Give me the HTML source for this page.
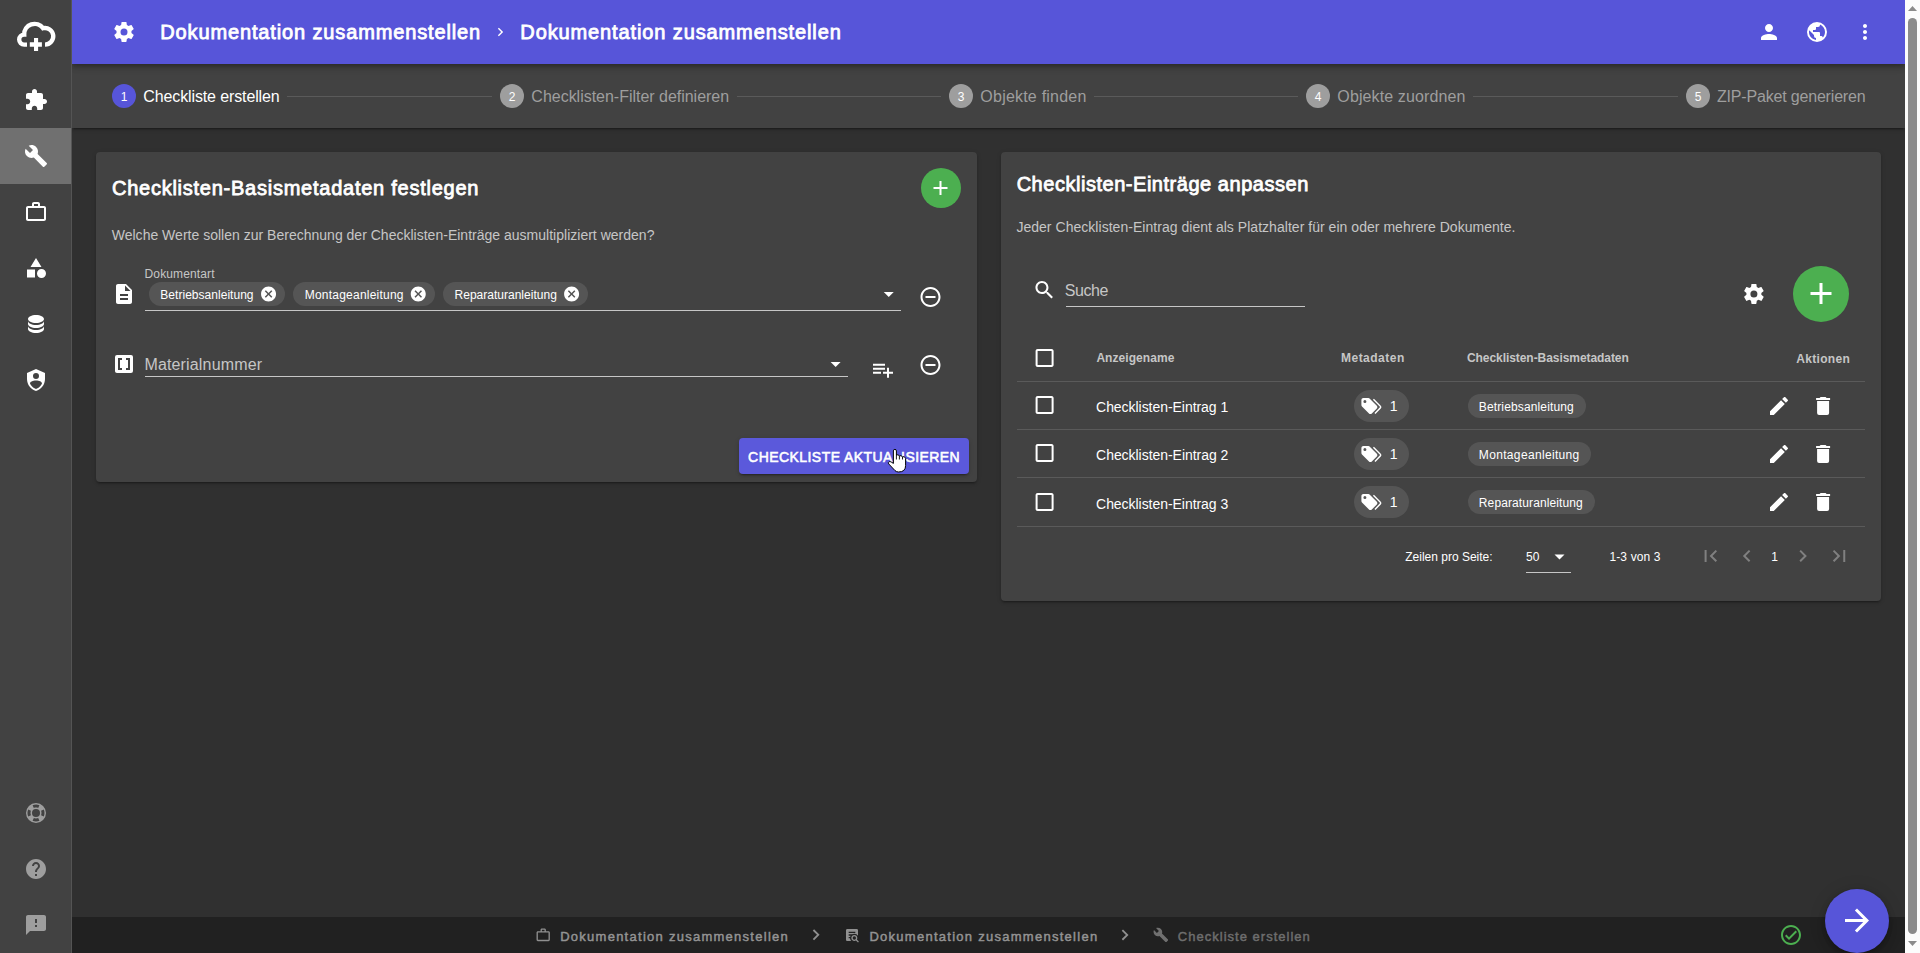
<!DOCTYPE html>
<html lang="de">
<head>
<meta charset="utf-8">
<title>Dokumentation zusammenstellen</title>
<style>
*{box-sizing:border-box;margin:0;padding:0}
html,body{width:1920px;height:953px;overflow:hidden;background:#303030;font-family:"Liberation Sans",sans-serif;color:#fff}
.abs{position:absolute}
.t{position:absolute;white-space:nowrap;line-height:1}
svg{position:absolute;display:block}
#sidebar{left:0;top:0;width:72px;height:953px;background:#424242;border-right:1px solid #545454}
#sideactive{left:0;top:128px;width:71px;height:56px;background:#707070}
#header{left:72px;top:0;width:1833px;height:64px;background:#5755d9;box-shadow:0 2px 4px -1px rgba(0,0,0,.2),0 4px 5px 0 rgba(0,0,0,.14),0 1px 10px 0 rgba(0,0,0,.12)}
#stepper{left:72px;top:64px;width:1833px;height:64px;background:#424242;box-shadow:0 3px 1px -2px rgba(0,0,0,.2),0 2px 2px 0 rgba(0,0,0,.14),0 1px 5px 0 rgba(0,0,0,.12)}
.card{background:#424242;border-radius:4px;box-shadow:0 3px 1px -2px rgba(0,0,0,.2),0 2px 2px 0 rgba(0,0,0,.14),0 1px 5px 0 rgba(0,0,0,.12)}
#footer{left:72px;top:917px;width:1833px;height:36px;background:#212121}
#scroll{left:1905px;top:0;width:15px;height:953px;background:#fcfcfc}
#thumb{left:1908px;top:18px;width:9px;height:916px;background:#8b8b8b;border-radius:5px}
.stepc{width:24px;height:24px;border-radius:50%;background:#9e9e9e;top:84px}
.stepn{font-size:12px;color:#fff;top:91px;width:24px;text-align:center}
.stepl{font-size:16px;top:88px;color:#9e9e9e}
.sline{height:1px;background:#5a5a5a;top:96px}
.chip{height:24px;border-radius:12px;background:#555}
.th{font-size:12px;font-weight:700;color:#c6c6c6}
.hline{height:1px;background:#5a5a5a}
</style>
</head>
<body>
<main>
<section id="basis">
<div class="abs card" id="cardL" style="left:96px;top:152px;width:881px;height:330px"></div>
<div class="t" id="lt" style="left:111.96px;top:178.07px;font-size:20px;font-weight:400;-webkit-text-stroke-width:.04em;letter-spacing:0.751px">Checklisten-Basismetadaten festlegen</div>
<div class="t" id="lsub" style="left:111.74px;top:228.15px;font-size:14px;color:#c6c6c6;letter-spacing:0.010px">Welche Werte sollen zur Berechnung der Checklisten-Einträge ausmultipliziert werden?</div>
<div class="abs" style="left:921px;top:168px;width:40px;height:40px;border-radius:50%;background:#4caf50"></div>
<svg viewBox="-0.5 0 24 24" style="left:928px;top:176px;width:24px;height:24px" fill="#fff"><path d="M19 13h-6v6h-2v-6H5v-2h6V5h2v6h6v2z"/></svg>
<svg viewBox="0 0 24 24" style="left:112px;top:282px;width:24px;height:24px" fill="#fff"><path d="M14 2H6c-1.1 0-1.99.9-1.99 2L4 20c0 1.1.89 2 1.99 2H18c1.1 0 2-.9 2-2V8l-6-6zm2 16H8v-2h8v2zm0-4H8v-2h8v2zm-3-5V3.5L18.5 9H13z"/></svg>
<div class="t" id="dok" style="left:144.54px;top:267.84px;font-size:12px;color:#c6c6c6;letter-spacing:0.129px">Dokumentart</div>
<div class="abs chip" style="left:149px;top:282px;width:136px"></div><div class="t" id="c0" style="left:160.31px;top:288.84px;font-size:12px;letter-spacing:0.032px">Betriebsanleitung</div><svg viewBox="-0.733 0 24 24" style="left:259px;top:285px;width:18px;height:18px" fill="#fff"><path d="M12 2C6.47 2 2 6.47 2 12s4.47 10 10 10 10-4.47 10-10S17.53 2 12 2zm5 13.59L15.59 17 12 13.41 8.41 17 7 15.59 10.59 12 7 8.41 8.41 7 12 10.59 15.59 7 17 8.41 13.41 12 17 15.59z"/></svg>
<div class="abs chip" style="left:293px;top:282px;width:142px"></div><div class="t" id="c1" style="left:304.68px;top:288.84px;font-size:12px;letter-spacing:0.229px">Montageanleitung</div><svg viewBox="-0.333 0 24 24" style="left:409px;top:285px;width:18px;height:18px" fill="#fff"><path d="M12 2C6.47 2 2 6.47 2 12s4.47 10 10 10 10-4.47 10-10S17.53 2 12 2zm5 13.59L15.59 17 12 13.41 8.41 17 7 15.59 10.59 12 7 8.41 8.41 7 12 10.59 15.59 7 17 8.41 13.41 12 17 15.59z"/></svg>
<div class="abs chip" style="left:443px;top:282px;width:145px"></div><div class="t" id="c2" style="left:454.54px;top:288.84px;font-size:12px;letter-spacing:0.012px">Reparaturanleitung</div><svg viewBox="-0.8 0 24 24" style="left:562px;top:285px;width:18px;height:18px" fill="#fff"><path d="M12 2C6.47 2 2 6.47 2 12s4.47 10 10 10 10-4.47 10-10S17.53 2 12 2zm5 13.59L15.59 17 12 13.41 8.41 17 7 15.59 10.59 12 7 8.41 8.41 7 12 10.59 15.59 7 17 8.41 13.41 12 17 15.59z"/></svg>
<div class="abs" style="left:145px;top:310px;width:756px;height:1px;background:#c6c6c6"></div>
<svg viewBox="-0.75 0 24 24" style="left:876px;top:282px;width:24px;height:24px" fill="#fff"><path d="M7 10l5 5 5-5z"/></svg>
<svg viewBox="-0.5 0 24 24" style="left:918px;top:285px;width:24px;height:24px" fill="#fff"><path d="M7 11v2h10v-2H7zm5-9C6.48 2 2 6.48 2 12s4.48 10 10 10 10-4.48 10-10S17.52 2 12 2zm0 18c-4.41 0-8-3.59-8-8s3.59-8 8-8 8 3.59 8 8-3.59 8-8 8z"/></svg>
<svg viewBox="0 0 24 24" style="left:112px;top:352px;width:24px;height:24px" fill="#fff"><path d="M3,5A2,2 0 0,1 5,3H19A2,2 0 0,1 21,5V19A2,2 0 0,1 19,21H5C3.89,21 3,20.1 3,19V5M6,6V18H10V16H8V8H10V6H6M16,16H14V18H18V6H14V8H16V16Z"/></svg>
<div class="t" id="mat" style="left:144.41px;top:357.46px;font-size:16px;color:#c6c6c6;letter-spacing:0.158px">Materialnummer</div>
<div class="abs" style="left:145px;top:376px;width:703px;height:1px;background:#c6c6c6"></div>
<svg viewBox="-0.6 0 24 24" style="left:823px;top:352px;width:24px;height:24px" fill="#fff"><path d="M7 10l5 5 5-5z"/></svg>
<svg viewBox="0 -0.7 24 24" style="left:871px;top:357px;width:24px;height:24px" fill="#fff"><path d="M2,16H10V14H2M18,14V10H16V14H12V16H16V20H18V16H22V14M14,6H2V8H14M14,10H2V12H14V10Z"/></svg>
<svg viewBox="-0.5 -0.9 24 24" style="left:918px;top:352px;width:24px;height:24px" fill="#fff"><path d="M7 11v2h10v-2H7zm5-9C6.48 2 2 6.48 2 12s4.48 10 10 10 10-4.48 10-10S17.52 2 12 2zm0 18c-4.41 0-8-3.59-8-8s3.59-8 8-8 8 3.59 8 8-3.59 8-8 8z"/></svg>
<div class="abs" style="left:739px;top:438px;width:230px;height:36px;border-radius:4px;background:#5b59db;box-shadow:0 3px 1px -2px rgba(0,0,0,.2),0 2px 2px 0 rgba(0,0,0,.14),0 1px 5px 0 rgba(0,0,0,.12)"></div>
<div class="t" id="btn" style="left:748.11px;top:450.15px;font-size:14px;font-weight:400;-webkit-text-stroke-width:.04em;letter-spacing:0.439px">CHECKLISTE AKTUALISIEREN</div>
</section>
<section id="eintraege">
<div class="abs card" id="cardR" style="left:1001px;top:152px;width:880px;height:449px"></div>
<div class="t" id="rt" style="left:1016.64px;top:174.07px;font-size:20px;font-weight:400;-webkit-text-stroke-width:.04em;letter-spacing:0.530px">Checklisten-Einträge anpassen</div>
<div class="t" id="rsub" style="left:1016.38px;top:220.15px;font-size:14px;color:#c6c6c6;letter-spacing:0.034px">Jeder Checklisten-Eintrag dient als Platzhalter für ein oder mehrere Dokumente.</div>
<svg viewBox="-0.45 -0.95 24 24" style="left:1032px;top:277px;width:24px;height:24px" fill="#fff"><path d="M15.5 14h-.79l-.28-.27C15.41 12.59 16 11.11 16 9.5 16 5.91 13.09 3 9.5 3S3 5.91 3 9.5 5.91 16 9.5 16c1.61 0 3.09-.59 4.23-1.57l.27.28v.79l5 4.99L20.49 19l-4.99-5zm-6 0C7.01 14 5 11.99 5 9.5S7.01 5 9.5 5 14 7.01 14 9.5 11.99 14 9.5 14z"/></svg>
<div class="t" id="suche" style="left:1064.84px;top:283.46px;font-size:16px;color:#c6c6c6;letter-spacing:-0.437px">Suche</div>
<div class="abs" style="left:1066px;top:306px;width:239px;height:1px;background:#c6c6c6"></div>
<svg viewBox="-0.9 -0.9 24 24" style="left:1741px;top:281px;width:24px;height:24px" fill="#fff"><path d="M12,15.5A3.5,3.5 0 0,1 8.5,12A3.5,3.5 0 0,1 12,8.5A3.5,3.5 0 0,1 15.5,12A3.5,3.5 0 0,1 12,15.5M19.43,12.97C19.47,12.65 19.5,12.33 19.5,12C19.5,11.67 19.47,11.34 19.43,11L21.54,9.37C21.73,9.22 21.78,8.95 21.66,8.73L19.66,5.27C19.54,5.05 19.27,4.96 19.05,5.05L16.56,6.05C16.04,5.66 15.5,5.32 14.87,5.07L14.5,2.42C14.46,2.18 14.25,2 14,2H10C9.75,2 9.54,2.18 9.5,2.42L9.13,5.07C8.5,5.32 7.96,5.66 7.44,6.05L4.95,5.05C4.73,4.96 4.46,5.05 4.34,5.27L2.34,8.73C2.21,8.95 2.27,9.22 2.46,9.37L4.57,11C4.53,11.34 4.5,11.67 4.5,12C4.5,12.33 4.53,12.65 4.57,12.97L2.46,14.63C2.27,14.78 2.21,15.05 2.34,15.27L4.34,18.73C4.46,18.95 4.73,19.03 4.95,18.95L7.44,17.94C7.96,18.34 8.5,18.68 9.13,18.93L9.5,21.58C9.54,21.82 9.75,22 10,22H14C14.25,22 14.46,21.82 14.5,21.58L14.87,18.93C15.5,18.67 16.04,18.34 16.56,17.94L19.05,18.95C19.27,19.03 19.54,18.95 19.66,18.73L21.66,15.27C21.78,15.05 21.73,14.78 21.54,14.63L19.43,12.97Z"/></svg>
<div class="abs" style="left:1793px;top:266px;width:56px;height:56px;border-radius:50%;background:#4caf50"></div>
<svg viewBox="0 -0.4 24 24" style="left:1803px;top:275px;width:36px;height:36px" fill="#fff"><path d="M19 13h-6v6h-2v-6H5v-2h6V5h2v6h6v2z"/></svg>
<svg viewBox="-0.6 0 24 24" style="left:1032px;top:346px;width:24px;height:24px" fill="#fff"><path d="M19 5v14H5V5h14m0-2H5c-1.1 0-2 .9-2 2v14c0 1.1.9 2 2 2h14c1.1 0 2-.9 2-2V5c0-1.1-.9-2-2-2z"/></svg>
<div class="t th" id="th1" style="left:1096.39px;top:351.84px;letter-spacing:0.061px">Anzeigename</div>
<div class="t th" id="th2" style="left:1340.98px;top:351.84px;letter-spacing:0.494px">Metadaten</div>
<div class="t th" id="th3" style="left:1466.99px;top:351.84px;letter-spacing:-0.064px">Checklisten-Basismetadaten</div>
<div class="t th" id="th4" style="left:1796.37px;top:352.84px;letter-spacing:0.300px">Aktionen</div>
<div class="abs hline" style="left:1017px;top:381px;width:848px"></div>
<div class="abs hline" style="left:1017px;top:429px;width:848px"></div>
<div class="abs hline" style="left:1017px;top:477px;width:848px"></div>
<div class="abs hline" style="left:1017px;top:526px;width:848px"></div>
<svg viewBox="-0.6 0 24 24" style="left:1032px;top:393px;width:24px;height:24px" fill="#fff"><path d="M19 5v14H5V5h14m0-2H5c-1.1 0-2 .9-2 2v14c0 1.1.9 2 2 2h14c1.1 0 2-.9 2-2V5c0-1.1-.9-2-2-2z"/></svg>
<div class="t" id="r0" style="left:1096.07px;top:400.15px;font-size:14px;letter-spacing:-0.045px">Checklisten-Eintrag 1</div>
<div class="abs" style="left:1354px;top:390px;width:55px;height:32px;border-radius:16px;background:#555"></div><svg viewBox="-0.4 -0.1 24 24" style="left:1359px;top:394px;width:24px;height:24px" fill="#fff"><path d="M5.5,9A1.5,1.5 0 0,0 7,7.5A1.5,1.5 0 0,0 5.5,6A1.5,1.5 0 0,0 4,7.5A1.5,1.5 0 0,0 5.5,9M17.41,11.58C17.77,11.94 18,12.44 18,13C18,13.55 17.78,14.05 17.41,14.41L12.41,19.41C12.05,19.77 11.55,20 11,20C10.45,20 9.95,19.78 9.58,19.41L2.59,12.42C2.22,12.05 2,11.55 2,11V6C2,4.89 2.89,4 4,4H9C9.55,4 10.05,4.22 10.41,4.58L17.41,11.58M13.54,5.71L14.54,4.71L21.41,11.58C21.78,11.94 22,12.45 22,13C22,13.55 21.78,14.05 21.42,14.41L16.04,19.79L15.04,18.79L20.75,13L13.54,5.71Z"/></svg>
<div class="t" id="n0" style="left:1389.85px;top:399.45px;font-size:14px">1</div>
<div class="abs chip" style="left:1467.7px;top:394px;width:118.3px"></div><div class="t" id="k0" style="left:1478.78px;top:401.14px;font-size:12px;letter-spacing:0.143px">Betriebsanleitung</div>
<svg viewBox="0 0 24 24" style="left:1767px;top:394px;width:24px;height:24px" fill="#fff"><path d="M20.71,7.04C21.1,6.65 21.1,6 20.71,5.63L18.37,3.29C18,2.9 17.35,2.9 16.96,3.29L15.12,5.12L18.87,8.87M3,17.25V21H6.75L17.81,9.93L14.06,6.18L3,17.25Z"/></svg>
<svg viewBox="-0.1 0 24 24" style="left:1811px;top:394px;width:24px;height:24px" fill="#fff"><path d="M19,4H15.5L14.5,3H9.5L8.5,4H5V6H19M6,19A2,2 0 0,0 8,21H16A2,2 0 0,0 18,19V7H6V19Z"/></svg>
<svg viewBox="-0.6 0 24 24" style="left:1032px;top:441px;width:24px;height:24px" fill="#fff"><path d="M19 5v14H5V5h14m0-2H5c-1.1 0-2 .9-2 2v14c0 1.1.9 2 2 2h14c1.1 0 2-.9 2-2V5c0-1.1-.9-2-2-2z"/></svg>
<div class="t" id="r1" style="left:1096.07px;top:448.15px;font-size:14px;letter-spacing:-0.042px">Checklisten-Eintrag 2</div>
<div class="abs" style="left:1354px;top:438px;width:55px;height:32px;border-radius:16px;background:#555"></div><svg viewBox="-0.4 -0.1 24 24" style="left:1359px;top:442px;width:24px;height:24px" fill="#fff"><path d="M5.5,9A1.5,1.5 0 0,0 7,7.5A1.5,1.5 0 0,0 5.5,6A1.5,1.5 0 0,0 4,7.5A1.5,1.5 0 0,0 5.5,9M17.41,11.58C17.77,11.94 18,12.44 18,13C18,13.55 17.78,14.05 17.41,14.41L12.41,19.41C12.05,19.77 11.55,20 11,20C10.45,20 9.95,19.78 9.58,19.41L2.59,12.42C2.22,12.05 2,11.55 2,11V6C2,4.89 2.89,4 4,4H9C9.55,4 10.05,4.22 10.41,4.58L17.41,11.58M13.54,5.71L14.54,4.71L21.41,11.58C21.78,11.94 22,12.45 22,13C22,13.55 21.78,14.05 21.42,14.41L16.04,19.79L15.04,18.79L20.75,13L13.54,5.71Z"/></svg>
<div class="t" id="n1" style="left:1389.85px;top:447.45px;font-size:14px">1</div>
<div class="abs chip" style="left:1467.7px;top:442px;width:123.3px"></div><div class="t" id="k1" style="left:1478.84px;top:448.94px;font-size:12px;letter-spacing:0.337px">Montageanleitung</div>
<svg viewBox="0 0 24 24" style="left:1767px;top:442px;width:24px;height:24px" fill="#fff"><path d="M20.71,7.04C21.1,6.65 21.1,6 20.71,5.63L18.37,3.29C18,2.9 17.35,2.9 16.96,3.29L15.12,5.12L18.87,8.87M3,17.25V21H6.75L17.81,9.93L14.06,6.18L3,17.25Z"/></svg>
<svg viewBox="-0.1 0 24 24" style="left:1811px;top:442px;width:24px;height:24px" fill="#fff"><path d="M19,4H15.5L14.5,3H9.5L8.5,4H5V6H19M6,19A2,2 0 0,0 8,21H16A2,2 0 0,0 18,19V7H6V19Z"/></svg>
<svg viewBox="-0.6 0 24 24" style="left:1032px;top:490px;width:24px;height:24px" fill="#fff"><path d="M19 5v14H5V5h14m0-2H5c-1.1 0-2 .9-2 2v14c0 1.1.9 2 2 2h14c1.1 0 2-.9 2-2V5c0-1.1-.9-2-2-2z"/></svg>
<div class="t" id="r2" style="left:1096.07px;top:497.15px;font-size:14px;letter-spacing:-0.046px">Checklisten-Eintrag 3</div>
<div class="abs" style="left:1354px;top:486px;width:55px;height:32px;border-radius:16px;background:#555"></div><svg viewBox="-0.4 -0.1 24 24" style="left:1359px;top:490px;width:24px;height:24px" fill="#fff"><path d="M5.5,9A1.5,1.5 0 0,0 7,7.5A1.5,1.5 0 0,0 5.5,6A1.5,1.5 0 0,0 4,7.5A1.5,1.5 0 0,0 5.5,9M17.41,11.58C17.77,11.94 18,12.44 18,13C18,13.55 17.78,14.05 17.41,14.41L12.41,19.41C12.05,19.77 11.55,20 11,20C10.45,20 9.95,19.78 9.58,19.41L2.59,12.42C2.22,12.05 2,11.55 2,11V6C2,4.89 2.89,4 4,4H9C9.55,4 10.05,4.22 10.41,4.58L17.41,11.58M13.54,5.71L14.54,4.71L21.41,11.58C21.78,11.94 22,12.45 22,13C22,13.55 21.78,14.05 21.42,14.41L16.04,19.79L15.04,18.79L20.75,13L13.54,5.71Z"/></svg>
<div class="t" id="n2" style="left:1389.85px;top:495.45px;font-size:14px">1</div>
<div class="abs chip" style="left:1467.7px;top:490px;width:127.3px"></div><div class="t" id="k2" style="left:1478.84px;top:496.94px;font-size:12px;letter-spacing:0.109px">Reparaturanleitung</div>
<svg viewBox="0 0 24 24" style="left:1767px;top:490px;width:24px;height:24px" fill="#fff"><path d="M20.71,7.04C21.1,6.65 21.1,6 20.71,5.63L18.37,3.29C18,2.9 17.35,2.9 16.96,3.29L15.12,5.12L18.87,8.87M3,17.25V21H6.75L17.81,9.93L14.06,6.18L3,17.25Z"/></svg>
<svg viewBox="-0.1 0 24 24" style="left:1811px;top:490px;width:24px;height:24px" fill="#fff"><path d="M19,4H15.5L14.5,3H9.5L8.5,4H5V6H19M6,19A2,2 0 0,0 8,21H16A2,2 0 0,0 18,19V7H6V19Z"/></svg>
<div class="t" id="zps" style="left:1405.26px;top:551.04px;font-size:12px">Zeilen pro Seite:</div>
<div class="t" id="p50" style="left:1526.05px;top:551.04px;font-size:12px;letter-spacing:0.029px">50</div>
<svg viewBox="-0.5 -0.5 24 24" style="left:1547px;top:544px;width:24px;height:24px" fill="#fff"><path d="M7 10l5 5 5-5z"/></svg>
<div class="abs" style="left:1526px;top:572px;width:45px;height:1px;background:#c6c6c6"></div>
<div class="t" id="pof" style="left:1609.45px;top:551.04px;font-size:12px;letter-spacing:0.128px">1-3 von 3</div>
<svg viewBox="-0.6 -0.9 24 24" style="left:1698px;top:543px;width:24px;height:24px" fill="#808080"><path d="M18.41 16.59L13.82 12l4.59-4.59L17 6l-6 6 6 6zM6 6h2v12H6z"/></svg>
<svg viewBox="-0.9 -0.9 24 24" style="left:1734px;top:543px;width:24px;height:24px" fill="#808080"><path d="M15.41 7.41L14 6l-6 6 6 6 1.41-1.41L10.83 12z"/></svg>
<div class="t" id="pg1" style="left:1771.22px;top:550.94px;font-size:12px">1</div>
<svg viewBox="-0.85 -0.9 24 24" style="left:1790px;top:543px;width:24px;height:24px" fill="#808080"><path d="M10 6L8.59 7.41 13.17 12l-4.58 4.59L10 18l6-6z"/></svg>
<svg viewBox="-0.25 -0.9 24 24" style="left:1827px;top:543px;width:24px;height:24px" fill="#808080"><path d="M5.59 7.41L10.18 12l-4.59 4.59L7 18l6-6-6-6zM16 6h2v12h-2z"/></svg>
</section>
</main>
<footer>
<div class="abs" id="footer"></div>
<svg viewBox="-0.3 -0.3 24 24" style="left:535px;top:927px;width:16px;height:16px" fill="#909090"><path d="M14 6V4h-4v2h4zM4 8v11h16V8H4zm16-2c1.11 0 2 .89 2 2v11c0 1.11-.89 2-2 2H4c-1.11 0-2-.89-2-2l.01-11c0-1.11.88-2 1.99-2h4V4c0-1.11.89-2 2-2h4c1.11 0 2 .89 2 2v2h4z"/></svg>
<div class="t" id="f1" style="left:560.14px;top:929.80px;font-size:13px;font-weight:400;-webkit-text-stroke-width:.035em;color:#949494;letter-spacing:1.266px">Dokumentation zusammenstellen</div>
<svg viewBox="-0.982 -0.927 24 24" style="left:804px;top:923px;width:22px;height:22px" fill="#909090"><path d="M10 6L8.59 7.41 13.17 12l-4.58 4.59L10 18l6-6z"/></svg>
<svg viewBox="0 0 24 24" style="left:844px;top:927px;width:16px;height:16px" fill="#909090"><path d="M15.5,12C18,12 20,14 20,16.5C20,17.38 19.75,18.21 19.31,18.9L22.39,22L21,23.39L17.88,20.32C17.19,20.75 16.37,21 15.5,21C13,21 11,19 11,16.5C11,14 13,12 15.5,12M15.5,14A2.5,2.5 0 0,0 13,16.5A2.5,2.5 0 0,0 15.5,19A2.5,2.5 0 0,0 18,16.5A2.5,2.5 0 0,0 15.5,14M7,15V17H9C9.14,18.55 9.8,19.94 10.81,21H5C3.89,21 3,20.1 3,19V5C3,3.89 3.89,3 5,3H19A2,2 0 0,1 21,5V13.03C19.85,11.21 17.82,10 15.5,10C14.23,10 13.04,10.37 12.04,11H7V13H10C9.64,13.6 9.34,14.28 9.17,15H7M17,9V7H7V9H17Z"/></svg>
<div class="t" id="f2" style="left:869.46px;top:929.80px;font-size:13px;font-weight:400;-webkit-text-stroke-width:.035em;color:#949494;letter-spacing:1.267px">Dokumentation zusammenstellen</div>
<svg viewBox="-0.927 -0.982 24 24" style="left:1113px;top:923px;width:22px;height:22px" fill="#909090"><path d="M10 6L8.59 7.41 13.17 12l-4.58 4.59L10 18l6-6z"/></svg>
<svg viewBox="-1.35 -1.35 24 24" style="left:1152px;top:926px;width:16px;height:16px" fill="#707070"><path d="M22.7 19l-9.1-9.1c.9-2.3.4-5-1.5-6.9-2-2-5-2.4-7.4-1.3L9 6 6 9 1.6 4.7C.4 7.1.9 10.1 2.9 12.1c1.9 1.9 4.6 2.4 6.9 1.5l9.1 9.1c.4.4 1 .4 1.4 0l2.3-2.3c.5-.4.5-1.1.1-1.4z"/></svg>
<div class="t" id="f3" style="left:1177.85px;top:929.80px;font-size:13px;font-weight:400;-webkit-text-stroke-width:.035em;color:#6e6e6e;letter-spacing:1.013px">Checkliste erstellen</div>
<svg viewBox="0 0 24 24" style="left:1779px;top:923px;width:24px;height:24px" fill="#4caf50"><path d="M12 2C6.5 2 2 6.5 2 12S6.5 22 12 22 22 17.5 22 12 17.5 2 12 2M12 20C7.59 20 4 16.41 4 12S7.59 4 12 4 20 7.590 20 12 16.41 20 12 20M16.59 7.58L10 14.17L7.41 11.59L6 13L10 17L18 9L16.59 7.58Z"/></svg>
<div class="abs" style="left:1825px;top:889px;width:64px;height:64px;border-radius:50%;background:#5755d9;box-shadow:0 3px 5px -1px rgba(0,0,0,.2),0 6px 10px 0 rgba(0,0,0,.14),0 1px 18px 0 rgba(0,0,0,.12)"></div>
<svg viewBox="0 -0.333 24 24" style="left:1839px;top:902px;width:36px;height:36px" fill="#fff"><path d="M12 4l-1.41 1.41L16.17 11H4v2h12.17l-5.58 5.59L12 20l8-8z"/></svg>
</footer>
<div id="steps">
<div class="abs" id="stepper"></div>
<div class="abs stepc" style="left:112px;background:#5755d9"></div><div class="t stepn" style="left:112px">1</div>
<div class="t stepl" id="s1" style="left:143.36px;color:#fff;top:88.84px;letter-spacing:-0.127px">Checkliste erstellen</div>
<div class="abs sline" style="left:287px;width:205px"></div>
<div class="abs stepc" style="left:500px"></div><div class="t stepn" style="left:500px">2</div>
<div class="t stepl" id="s2" style="left:531.36px;top:88.84px;letter-spacing:-0.020px">Checklisten-Filter definieren</div>
<div class="abs sline" style="left:737px;width:204px"></div>
<div class="abs stepc" style="left:949px"></div><div class="t stepn" style="left:949px">3</div>
<div class="t stepl" id="s3" style="left:980.37px;top:88.84px;letter-spacing:0.212px">Objekte finden</div>
<div class="abs sline" style="left:1094px;width:204px"></div>
<div class="abs stepc" style="left:1306px"></div><div class="t stepn" style="left:1306px">4</div>
<div class="t stepl" id="s4" style="left:1337.37px;top:88.84px;letter-spacing:0.115px">Objekte zuordnen</div>
<div class="abs sline" style="left:1473px;width:205px"></div>
<div class="abs stepc" style="left:1686px"></div><div class="t stepn" style="left:1686px">5</div>
<div class="t stepl" id="s5" style="left:1716.94px;top:88.84px;letter-spacing:-0.179px">ZIP-Paket generieren</div>
</div>
<header>
<div class="abs" id="header"></div>
<svg viewBox="0 0 24 24" style="left:112px;top:20px;width:24px;height:24px" fill="#fff"><path d="M12,15.5A3.5,3.5 0 0,1 8.5,12A3.5,3.5 0 0,1 12,8.5A3.5,3.5 0 0,1 15.5,12A3.5,3.5 0 0,1 12,15.5M19.43,12.97C19.47,12.65 19.5,12.33 19.5,12C19.5,11.67 19.47,11.34 19.43,11L21.54,9.37C21.73,9.22 21.78,8.95 21.66,8.73L19.66,5.27C19.54,5.05 19.27,4.96 19.05,5.05L16.56,6.05C16.04,5.66 15.5,5.32 14.87,5.07L14.5,2.42C14.46,2.18 14.25,2 14,2H10C9.75,2 9.54,2.18 9.5,2.42L9.13,5.07C8.5,5.32 7.96,5.66 7.44,6.05L4.95,5.05C4.73,4.96 4.46,5.05 4.34,5.27L2.34,8.73C2.21,8.95 2.27,9.22 2.46,9.37L4.57,11C4.53,11.34 4.5,11.67 4.5,12C4.5,12.33 4.53,12.65 4.57,12.97L2.46,14.63C2.27,14.78 2.21,15.05 2.34,15.27L4.34,18.73C4.46,18.95 4.73,19.03 4.95,18.95L7.44,17.94C7.96,18.34 8.5,18.68 9.13,18.93L9.5,21.58C9.54,21.82 9.75,22 10,22H14C14.25,22 14.46,21.82 14.5,21.58L14.87,18.93C15.5,18.67 16.04,18.34 16.56,17.94L19.05,18.95C19.27,19.03 19.54,18.95 19.66,18.73L21.66,15.27C21.78,15.05 21.73,14.78 21.54,14.63L19.43,12.97Z"/></svg>
<svg viewBox="-1.129 -0.776 24 24" style="left:491px;top:23px;width:17px;height:17px" fill="#fff"><path d="M10 6L8.59 7.41 13.17 12l-4.58 4.59L10 18l6-6z"/></svg>
<svg viewBox="0 0 24 24" style="left:1757px;top:20px;width:24px;height:24px" fill="#fff"><path d="M12 12c2.21 0 4-1.79 4-4s-1.79-4-4-4-4 1.79-4 4 1.79 4 4 4zm0 2c-2.67 0-8 1.34-8 4v2h16v-2c0-2.66-5.33-4-8-4z"/></svg>
<svg viewBox="0 0 24 24" style="left:1805px;top:20px;width:24px;height:24px" fill="#fff"><path d="M17.9,17.39C17.64,16.59 16.89,16 16,16H15V13A1,1 0 0,0 14,12H8V10H10A1,1 0 0,0 11,9V7H13A2,2 0 0,0 15,5V4.59C17.93,5.77 20,8.64 20,12C20,14.08 19.2,15.97 17.9,17.39M11,19.93C7.05,19.44 4,16.08 4,12C4,11.38 4.08,10.78 4.21,10.21L9,15V16A2,2 0 0,0 11,18M12,2A10,10 0 0,0 2,12A10,10 0 0,0 12,22A10,10 0 0,0 22,12A10,10 0 0,0 12,2Z"/></svg>
<svg viewBox="0 0 24 24" style="left:1853px;top:20px;width:24px;height:24px" fill="#fff"><path d="M12 8c1.1 0 2-.9 2-2s-.9-2-2-2-2 .9-2 2 .9 2 2 2zm0 2c-1.1 0-2 .9-2 2s.9 2 2 2 2-.9 2-2-.9-2-2-2zm0 6c-1.1 0-2 .9-2 2s.9 2 2 2 2-.9 2-2-.9-2-2-2z"/></svg>
<div class="t" id="h1" style="left:160.27px;top:22.07px;font-size:20px;font-weight:400;-webkit-text-stroke-width:.04em;letter-spacing:0.865px">Dokumentation zusammenstellen</div>
<div class="t" id="h2" style="left:520.35px;top:22.07px;font-size:20px;font-weight:400;-webkit-text-stroke-width:.04em;letter-spacing:0.883px">Dokumentation zusammenstellen</div>
</header>
<nav>
<div class="abs" id="sidebar"></div>
<div class="abs" id="sideactive"></div>
<svg viewBox="0 0 72 72" style="left:0px;top:0px;width:72px;height:72px"><path d="M27 44.6H24.2A5 5 0 0 1 24.2 34.6A10.4 10.4 0 0 1 43.07 28.22A8.3 8.3 0 1 1 45 44.6" fill="none" stroke="#fff" stroke-width="4.4"/><path d="M29.8 42.3H34V38.1H38.1V42.3H41.9V46.8H38.1V51H34V46.8H29.8Z" fill="#fff"/></svg>
<svg viewBox="0 0 24 24" style="left:24px;top:88px;width:24px;height:24px" fill="#fff"><path d="M20.5 11H19V7c0-1.1-.9-2-2-2h-4V3.5C13 2.12 11.88 1 10.5 1S8 2.12 8 3.5V5H4c-1.1 0-1.99.9-1.99 2v3.8H3.5c1.49 0 2.7 1.21 2.7 2.7s-1.21 2.7-2.7 2.7H2V20c0 1.1.9 2 2 2h3.8v-1.5c0-1.49 1.21-2.7 2.7-2.7 1.49 0 2.7 1.21 2.7 2.7V22H17c1.1 0 2-.9 2-2v-4h1.5c1.38 0 2.5-1.12 2.5-2.5S21.88 11 20.5 11z"/></svg>
<svg viewBox="0 0 24 24" style="left:24px;top:144px;width:24px;height:24px" fill="#fff"><path d="M22.7 19l-9.1-9.1c.9-2.3.4-5-1.5-6.9-2-2-5-2.4-7.4-1.3L9 6 6 9 1.6 4.7C.4 7.1.9 10.1 2.9 12.1c1.9 1.9 4.6 2.4 6.9 1.5l9.1 9.1c.4.4 1 .4 1.4 0l2.3-2.3c.5-.4.5-1.1.1-1.4z"/></svg>
<svg viewBox="0 0 24 24" style="left:24px;top:200px;width:24px;height:24px" fill="#fff"><path d="M14 6V4h-4v2h4zM4 8v11h16V8H4zm16-2c1.11 0 2 .89 2 2v11c0 1.11-.89 2-2 2H4c-1.11 0-2-.89-2-2l.01-11c0-1.11.88-2 1.99-2h4V4c0-1.11.89-2 2-2h4c1.11 0 2 .89 2 2v2h4z"/></svg>
<svg viewBox="0 0 24 24" style="left:24px;top:256px;width:24px;height:24px" fill="#fff"><path d="M12 2l-5.5 9h11zM17.5 13a4.5 4.5 0 1 0 0 9 4.5 4.5 0 0 0 0-9zM3 13.5h8v8H3z"/></svg>
<svg viewBox="0 0 24 24" style="left:24px;top:312px;width:24px;height:24px" fill="#fff"><path d="M12,3C7.58,3 4,4.79 4,7C4,9.21 7.58,11 12,11C16.42,11 20,9.21 20,7C20,4.79 16.42,3 12,3M4,9V12C4,14.21 7.58,16 12,16C16.42,16 20,14.21 20,12V9C20,11.21 16.42,13 12,13C7.58,13 4,11.21 4,9M4,14V17C4,19.21 7.58,21 12,21C16.42,21 20,19.21 20,17V14C20,16.21 16.42,18 12,18C7.58,18 4,16.21 4,14Z"/></svg>
<svg viewBox="0 0 24 24" style="left:24px;top:368px;width:24px;height:24px" fill="#fff"><path d="M12,1L3,5V11C3,16.55 6.84,21.74 12,23C17.16,21.74 21,16.55 21,11V5L12,1M12,5A3,3 0 0,1 15,8A3,3 0 0,1 12,11A3,3 0 0,1 9,8A3,3 0 0,1 12,5M17.13,17C15.92,18.85 14.11,20.24 12,20.92C9.89,20.24 8.08,18.85 6.87,17C6.53,16.5 6.24,16 6,15.47C6,13.82 8.71,12.47 12,12.47C15.29,12.47 18,13.79 18,15.47C17.76,16 17.47,16.5 17.13,17Z"/></svg>
<svg viewBox="0 0 24 24" style="left:24px;top:801px;width:24px;height:24px" fill="#9e9e9e"><path d="M19.79,15.41C20.74,13.24 20.74,10.75 19.79,8.59L17.05,9.83C17.65,11.21 17.65,12.78 17.06,14.17L19.79,15.41M15.42,4.21C13.25,3.26 10.76,3.26 8.59,4.21L9.83,6.94C11.22,6.35 12.79,6.35 14.18,6.95L15.42,4.21M4.21,8.58C3.26,10.76 3.26,13.24 4.21,15.42L6.95,14.17C6.35,12.79 6.35,11.21 6.95,9.82L4.21,8.58M8.59,19.79C10.76,20.74 13.25,20.74 15.42,19.78L14.18,17.05C12.8,17.65 11.22,17.65 9.84,17.06L8.59,19.79M12,2A10,10 0 0,1 22,12A10,10 0 0,1 12,22A10,10 0 0,1 2,12A10,10 0 0,1 12,2M12,8A4,4 0 0,0 8,12A4,4 0 0,0 12,16A4,4 0 0,0 16,12A4,4 0 0,0 12,8Z"/></svg>
<svg viewBox="0 0 24 24" style="left:24px;top:857px;width:24px;height:24px" fill="#9e9e9e"><path d="M12 2C6.48 2 2 6.48 2 12s4.48 10 10 10 10-4.48 10-10S17.52 2 12 2zm1 17h-2v-2h2v2zm2.07-7.75l-.9.92C13.45 12.9 13 13.5 13 15h-2v-.5c0-1.1.45-2.1 1.17-2.83l1.24-1.26c.37-.36.59-.86.59-1.41 0-1.1-.9-2-2-2s-2 .9-2 2H8c0-2.21 1.79-4 4-4s4 1.79 4 4c0 .88-.36 1.68-.93 2.25z"/></svg>
<svg viewBox="0 0 24 24" style="left:24px;top:913px;width:24px;height:24px" fill="#9e9e9e"><path d="M20 2H4c-1.1 0-1.99.9-1.99 2L2 22l4-4h14c1.1 0 2-.9 2-2V4c0-1.1-.9-2-2-2zm-7 12h-2v-2h2v2zm0-4h-2V6h2v4z"/></svg>
</nav>
<div id="scrollbar">
<div class="abs" id="scroll"></div>
<div class="abs" id="thumb"></div>
<svg viewBox="0 0 15 953" style="left:1905px;top:0px;width:15px;height:953px"><path d="M3 11h9l-4.500-5z" fill="#8b8b8b"/><path d="M3 941h9l-4.500 5z" fill="#8b8b8b"/></svg>
</div>
<svg viewBox="0 0 36 36" style="left:880px;top:444px;width:36px;height:36px"><path d="M13.400 19.400V6.900Q13.400 5.400 14.900 5.400Q16.400 5.400 16.400 6.900V11Q18 10.200 19.400 11.800Q21 11.200 22.500 12.700Q24.800 12.100 25.600 14.300V21.500Q25.600 28 18.500 28Q16.400 28 15 26.600L8.700 19.900Q7.700 18.400 9.200 17.700Q10.200 17.400 11.200 18Z" fill="#fff" stroke="#000" stroke-width="1" stroke-linejoin="round"/><path d="M16.400 11V15.500M19.400 12V15.500M22.500 13V15.500" stroke="#000" stroke-width=".9" fill="none"/></svg>
</body>
</html>
